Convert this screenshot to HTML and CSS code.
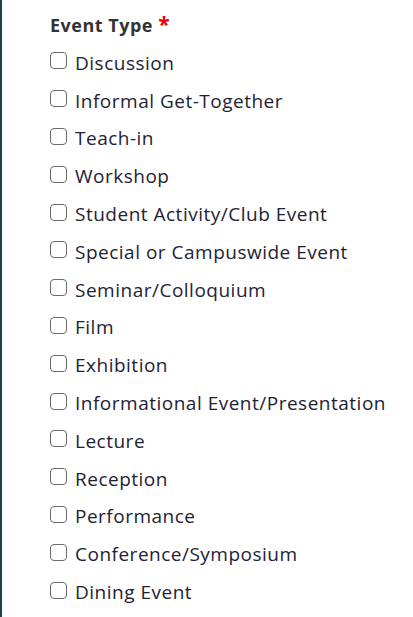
FILE: index.html
```html
<!DOCTYPE html>
<html>
<head>
<meta charset="utf-8">
<link rel="stylesheet" href="styles.css">
</head>
<body>
<div class="page">
  <fieldset class="field">
    <legend class="label">Event Type <span class="req">*</span></legend>
    <label class="opt"><input type="checkbox"><span>Discussion</span></label>
    <label class="opt"><input type="checkbox"><span>Informal Get-Together</span></label>
    <label class="opt"><input type="checkbox"><span>Teach-in</span></label>
    <label class="opt"><input type="checkbox"><span>Workshop</span></label>
    <label class="opt"><input type="checkbox"><span>Student Activity/Club Event</span></label>
    <label class="opt"><input type="checkbox"><span>Special or Campuswide Event</span></label>
    <label class="opt"><input type="checkbox"><span>Seminar/Colloquium</span></label>
    <label class="opt"><input type="checkbox"><span>Film</span></label>
    <label class="opt"><input type="checkbox"><span>Exhibition</span></label>
    <label class="opt"><input type="checkbox"><span>Informational Event/Presentation</span></label>
    <label class="opt"><input type="checkbox"><span>Lecture</span></label>
    <label class="opt"><input type="checkbox"><span>Reception</span></label>
    <label class="opt"><input type="checkbox"><span>Performance</span></label>
    <label class="opt"><input type="checkbox"><span>Conference/Symposium</span></label>
    <label class="opt"><input type="checkbox"><span>Dining Event</span></label>
  </fieldset>
</div>
</body>
</html>
```
FILE: styles.css
```css
html, body { margin: 0; padding: 0; background: #fff; }
body { font-family: "Open Sans", sans-serif; color: #222; }
.page {
  border-left: 2px solid #17474a;
  min-height: 617px;
  box-sizing: border-box;
  padding: 11px 0 0 48px;
}
.field { border: 0; margin: 0; padding: 0; display: flex; flex-direction: column; }
.label {
  padding: 0;
  font-size: 18px;
  font-weight: 700;
  color: #333;
  line-height: 26px;
  letter-spacing: 0.5px;
  margin-bottom: 6px;
}
.req { color: #e00; font-size: 21px; }
.opt {
  display: flex;
  align-items: center;
  height: 37.8px;
  font-size: 19px;
  color: #1e2235;
  letter-spacing: 0.5px;
}
.opt input {
  appearance: none;
  -webkit-appearance: none;
  width: 17px;
  height: 17px;
  margin: 0 8px 0 0;
  border: 1.5px solid #6a6a6a;
  border-radius: 4px;
  box-sizing: border-box;
  position: relative;
  top: -2px;
  flex: none;
}
```
